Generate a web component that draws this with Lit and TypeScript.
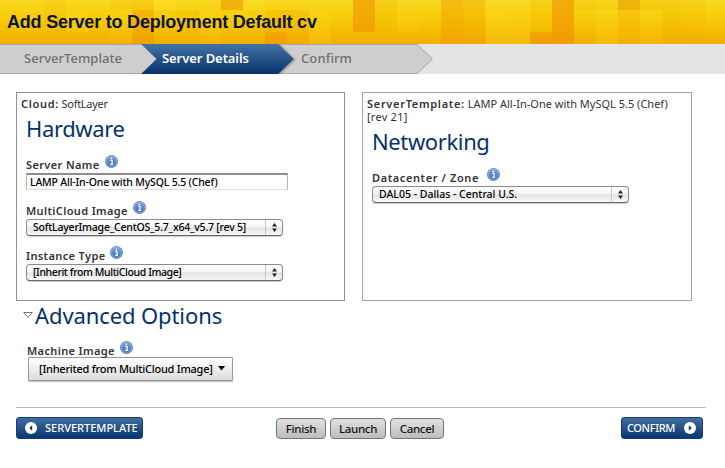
import { LitElement, html, css, svg } from "lit";
import { customElement, property } from "lit/decorators.js";

const sans = css`"Noto Sans", "Open Sans", "DejaVu Sans", sans-serif`;

/* Header mosaic tiles: column, top, height, fill, opacity (22px columns). */
const TILES: [number, number, number, string, number][] = [
  [2, 0, 32, "#f0a800", 0.12], [5, 0, 10, "#f0a800", 0.12], [5, 10, 34, "#ffe030", 0.1],
  [6, 0, 10, "#f0a000", 0.18], [6, 10, 34, "#ee8800", 0.36],
  [7, 0, 10, "#ffe030", 0.4], [10, 0, 10, "#ea9600", 0.55], [11, 0, 10, "#ffe030", 0.4],
  [12, 10, 22, "#f0a000", 0.25], [12, 32, 12, "#ee8400", 0.35], [13, 10, 34, "#f0a000", 0.22],
  [14, 10, 34, "#ffe030", 0.2], [8, 10, 22, "#f0a000", 0.12],
  [3, 10, 22, "#ffe030", 0.18], [9, 10, 34, "#ffe030", 0.15],
  [16, 0, 32, "#ee8c00", 0.55], [17, 0, 32, "#f0b000", 0.22], [18, 0, 32, "#ffe030", 0.12],
  [20, 0, 32, "#ee9600", 0.4], [20, 32, 12, "#ee9000", 0.3], [21, 0, 44, "#ee9600", 0.28],
  [22, 0, 44, "#ffe030", 0.24], [23, 0, 44, "#ffe030", 0.22], [24, 0, 32, "#f5b800", 0.25],
  [24, 32, 12, "#ee8000", 0.38], [25, 0, 44, "#ee8800", 0.55],
  [26, 0, 10, "#f5b800", 0.25], [27, 0, 10, "#f5b800", 0.1], [28, 0, 10, "#e69400", 0.5],
  [28, 10, 22, "#f0a800", 0.25], [29, 0, 10, "#f0b800", 0.25], [27, 10, 34, "#ffe030", 0.2],
  [29, 10, 34, "#ffe030", 0.15], [30, 0, 44, "#f2b000", 0.22], [31, 0, 44, "#f2b000", 0.18],
];

@customElement("info-icon")
class InfoIcon extends LitElement {
  static styles = css`
    :host { display: block; width: 13px; height: 13px; }
    svg { display: block; }
  `;
  render() {
    return html`<svg width="13" height="13" viewBox="0 0 13 13">
      <defs><linearGradient id="g" x1="0" y1="0" x2="0" y2="1">
        <stop offset="0" stop-color="#7ba0dc" /><stop offset="1" stop-color="#3a6ebd" />
      </linearGradient></defs>
      <circle cx="6.5" cy="6.5" r="6.1" fill="url(#g)" stroke="#5f86bf" stroke-width=".8" />
      <circle cx="6.5" cy="6.5" r="5.1" fill="none" stroke="#b4c9ea" stroke-width=".5" />
      <path d="M5.300 5.500h1.800v3.700M5.100 9.400h3" stroke="#fff" stroke-width="1.200" fill="none" />
      <circle cx="6.400" cy="3.500" r=".9" fill="#fff" />
    </svg>`;
  }
}

@customElement("pop-select")
class PopSelect extends LitElement {
  @property() value = "";
  static styles = css`
    :host {
      box-sizing: border-box; display: flex; width: 257px; height: 17px;
      border: 1px solid #8c8c8c; border-bottom-color: #666; border-radius: 4px;
      background: linear-gradient(#fff 0, #f5f5f5 45%, #e4e4e4 52%, #f8f8f8 100%);
      box-shadow: 0 1px 1px rgba(0, 0, 0, .2);
      font: 500 10.5px/15px ${sans}; color: #000;
    }
    .value { flex: 1; padding-left: 6px; white-space: nowrap; }
    .arrows { width: 16px; border-left: 1px solid #c8c8c8; display: flex; align-items: center; justify-content: center; }
  `;
  render() {
    return html`<span class="value">${this.value}</span>
      <span class="arrows"><svg width="7" height="9" viewBox="0 0 7 9">
        <path d="M1 3.5L3.5 0 6 3.5zM1 5.5L3.5 9 6 5.5z" fill="#222" />
      </svg></span>`;
  }
}

@customElement("app-root")
class AppRoot extends LitElement {
  static styles = css`
    :host { display: block; width: 725px; height: 468px; background: #fff; overflow: hidden; font: 11px/13px ${sans}; color: #333; }
    * { box-sizing: border-box; }
    .banner { position: relative; height: 44px; background: linear-gradient(#f8d820 0, #f8cc08 40%, #f2ae00 100%); }
    .mosaic { position: absolute; inset: 0; display: block; }
    h1 { position: relative; margin: 0; padding: 11px 0 0 7px; font: bold 18px/22px "Liberation Sans", Arial, sans-serif; letter-spacing: -.21px; color: #0a1530; white-space: nowrap; }
    .steps { position: relative; height: 30px; background: #e4e4e4; }
    .steps svg { position: absolute; inset: 0; display: block; }
    .labels { position: relative; display: flex; font: 500 13px/29px ${sans}; color: #707070; white-space: nowrap; }
    .labels span:nth-child(1) { width: 138px; padding-left: 24px; letter-spacing: .03px; }
    .labels span:nth-child(2) { width: 138px; padding-left: 24px; font-weight: 600; letter-spacing: -.07px; color: #fff; }
    .labels span:nth-child(3) { padding-left: 25px; letter-spacing: .1px; }
    .panels { display: flex; gap: 17px; padding: 18px 0 0 16px; }
    .panel { width: 329px; height: 209px; border: 1px solid #969194; padding: 4px 0 0 4px; }
    .panel + .panel { width: 330px; border-color: #a8a6a8; }
    .meta { letter-spacing: -.3px; white-space: nowrap; }
    .meta.wide { letter-spacing: 0; }
    .meta .rev { letter-spacing: .25px; }
    .meta b { font-weight: 600; letter-spacing: .7px; color: #333; }
    .label { display: flex; gap: 5px; height: 18px; font-weight: 600; letter-spacing: .37px; color: #333; white-space: nowrap; line-height: 20px; }
    .panel + .panel .label { letter-spacing: .6px; gap: 8px; }
    h2 { margin: 0; font: 400 22px/26px ${sans}; color: #06316d; white-space: nowrap; }
    .panel h2 { padding: 5px 0 0 5px; letter-spacing: -.38px; }
    .field { padding-left: 5px; }
    .input { width: 262px; height: 17px; border: 1px solid #b5b5b5; border-top: 2px solid #8f8b8e; border-bottom-color: #ddd; padding-left: 3px; color: #000; font-weight: 500; font-size: 10.5px; letter-spacing: -.18px; line-height: 15px; }
    .hw1 { padding-top: 14px; }
    .hw2 { padding-top: 11px; letter-spacing: -.22px; }
    .hw3 { padding-top: 10px; letter-spacing: -.4px; }
    .advanced { padding: 0 0 0 23px; }
    .title { display: flex; align-items: center; gap: 2px; padding-top: 1px; }
    .title h2 { letter-spacing: -.1px; }
    .machine { padding: 13px 0 0 4px; }
    .machine .label { height: 16px; }
    .menu { display: flex; align-items: center; gap: 5px; width: 205px; height: 24px; margin-left: 1px; padding: 0 0 2px 10px; border: 1px solid #999; border-radius: 1px; background: linear-gradient(#fff, #dcdcdc); box-shadow: 0 1px 1px rgba(0, 0, 0, .25); color: #000; font-weight: 500; letter-spacing: -.24px; white-space: nowrap; }
    .footer { display: flex; align-items: flex-start; margin: 26px 19px 0 16px; border-top: 1px solid #bbb; padding-top: 9px; }
    .blue { display: flex; align-items: center; height: 22px; border: 1px solid #123f78; border-radius: 3px; background: linear-gradient(#416d9e, #083670); color: #fff; font: 500 11px/20px ${sans}; white-space: nowrap; }
    .back { width: 127px; padding-left: 8px; gap: 8px; }
    .next { width: 82px; padding-left: 5px; gap: 9px; margin: 0 3px 0 auto; letter-spacing: -.4px; }
    .actions { display: flex; gap: 4px; margin: 1px 0 0 133px; }
    .gray { height: 21px; border: 1px solid #777; border-radius: 4px; background: linear-gradient(#e0e0e0, #bdbdbd); color: #111; font: 500 11.5px/19px ${sans}; letter-spacing: -.3px; text-align: center; white-space: nowrap; }
    .finish { width: 50px; }
    .launch { width: 56px; }
    .cancel { width: 54px; }
  `;

  private round(d: string) {
    return html`<svg width="12" height="12" viewBox="0 0 12 12">
      <circle cx="6" cy="6" r="6" fill="#fff" /><path d=${d} fill="#0c3567" />
    </svg>`;
  }

  render() {
    return html`
      <div class="banner">
        <svg class="mosaic" width="725" height="44">
          ${TILES.map(([c, y, h, f, o]) => svg`<rect x=${Math.round(c * 22.07)} y=${y} width="22" height=${h} fill=${f} fill-opacity=${o} />`)}
        </svg>
        <h1>Add Server to Deployment Default cv</h1>
      </div>
      <div class="steps">
        <svg width="725" height="30">
          <defs>
            <linearGradient id="blue" x1="0" y1="0" x2="0" y2="1"><stop offset="0" stop-color="#4273a6" /><stop offset="1" stop-color="#063169" /></linearGradient>
            <filter id="soft"><feGaussianBlur stdDeviation="1" /></filter>
          </defs>
          <path d="M-2 .5H417L432.500 15 417 29.500H-2z" fill="#cecece" stroke="#a8a8a8" />
          <path d="M270 1H280L295 15.500 280 30H270z" fill="#555" opacity=".65" filter="url(#soft)" />
          <path d="M141 0H278L293.500 15 278 30H141L156.500 15z" fill="url(#blue)" />
        </svg>
        <div class="labels"><span>ServerTemplate</span><span>Server Details</span><span>Confirm</span></div>
      </div>
      <div class="panels">
        <section class="panel">
          <div class="meta"><b>Cloud:</b> SoftLayer</div>
          <h2>Hardware</h2>
          <div class="field hw1"><div class="label">Server Name <info-icon></info-icon></div><div class="input">LAMP All-In-One with MySQL 5.5 (Chef)</div></div>
          <div class="field hw2"><div class="label">MultiCloud Image <info-icon></info-icon></div><pop-select value="SoftLayerImage_CentOS_5.7_x64_v5.7 [rev 5]"></pop-select></div>
          <div class="field hw3"><div class="label">Instance Type <info-icon></info-icon></div><pop-select value="[Inherit from MultiCloud Image]"></pop-select></div>
        </section>
        <section class="panel">
          <div class="meta wide"><b>ServerTemplate:</b> LAMP All-In-One with MySQL 5.5 (Chef)<br /><span class="rev">[rev 21]</span></div>
          <h2>Networking</h2>
          <div class="field hw1"><div class="label">Datacenter / Zone <info-icon></info-icon></div><pop-select value="DAL05 - Dallas - Central U.S."></pop-select></div>
        </section>
      </div>
      <div class="advanced">
        <div class="title">
          <svg width="10" height="8" viewBox="0 0 10 8"><path d="M.7 1.500H9.300L5 6.500z" fill="#fff" stroke="#777" /></svg>
          <h2>Advanced Options</h2>
        </div>
        <div class="machine">
          <div class="label">Machine Image <info-icon></info-icon></div>
          <div class="menu"><span>[Inherited from MultiCloud Image]</span><svg width="8" height="5"><path d="M0 0H7L3.500 4.500z" fill="#000" /></svg></div>
        </div>
      </div>
      <div class="footer">
        <div class="blue back">${this.round("M7.200 3.200v5.600L4.200 6z")}<span>SERVERTEMPLATE</span></div>
        <div class="actions">
          <div class="gray finish">Finish</div><div class="gray launch">Launch</div><div class="gray cancel">Cancel</div>
        </div>
        <div class="blue next"><span>CONFIRM</span>${this.round("M4.800 3.200v5.600L7.800 6z")}</div>
      </div>
    `;
  }
}
